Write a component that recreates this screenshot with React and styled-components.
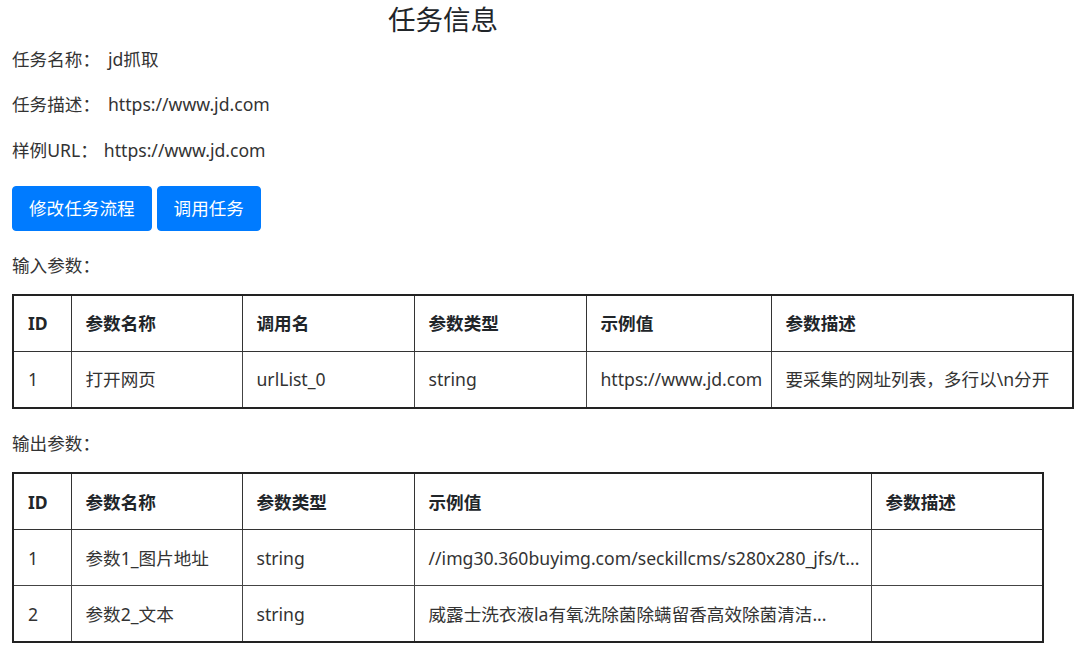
import React from 'react';
import styled, { createGlobalStyle } from 'styled-components';

const GlobalStyle = createGlobalStyle`
  html, body {
    margin: 0;
    padding: 0;
    background: #fff;
  }
  body {
    font-family: "Segoe UI", "Noto Sans", "Noto Sans CJK SC", sans-serif;
    font-size: 17.6px;
    line-height: 1.5;
    color: #333;
  }
`;

const Page = styled.div`
  padding: 0 8px 0 12px;
  width: 1080px;
  box-sizing: border-box;
`;

const Title = styled.h2`
  width: 862px;
  margin: 0;
  padding-top: 3px;
  text-align: center;
  font-size: 27.5px;
  font-weight: 400;
  line-height: 34px;
  color: #212529;
`;

const InfoList = styled.div`
  display: flex;
  flex-direction: column;
  gap: 19px;
  margin-top: 9px;
`;

const InfoRow = styled.div`
  display: flex;
  gap: ${p => p.$gap || 8}px;
  line-height: 26.4px;
`;

const Toolbar = styled.div`
  display: flex;
  gap: 5px;
  margin-top: 23px;
`;

const Button = styled.button`
  font-family: inherit;
  font-size: 17.6px;
  line-height: 26.4px;
  color: #fff;
  background: #007bff;
  border: 1px solid #007bff;
  border-radius: 4px;
  padding: 8px 16px;
  cursor: pointer;
`;

const SectionLabel = styled.div`
  line-height: 26.4px;
  margin-top: ${p => p.$top}px;
  margin-bottom: 16px;
`;

const Table = styled.table`
  border-collapse: collapse;
  table-layout: fixed;
  width: ${p => p.$width}px;
  border: 2px solid #222;
`;

const Col = styled.col`
  width: ${p => p.$w}px;
`;

const Th = styled.th`
  height: 55px;
  padding: 0 14px;
  text-align: left;
  font-weight: 700;
  color: #212529;
  border: 1px solid #333;
  vertical-align: middle;
`;

const Td = styled.td`
  height: 55px;
  padding: 0 12px 0 14px;
  color: #333;
  border: 1px solid #444;
  vertical-align: middle;
  white-space: nowrap;
  overflow: hidden;
`;

const inputCols = [58, 171, 172, 172, 185, 302];
const inputHead = ['ID', '参数名称', '调用名', '参数类型', '示例值', '参数描述'];
const inputRows = [
  ['1', '打开网页', 'urlList_0', 'string', 'https://www.jd.com', '要采集的网址列表，多行以\\n分开'],
];

const outputCols = [58, 171, 172, 457, 172];
const outputHead = ['ID', '参数名称', '参数类型', '示例值', '参数描述'];
const outputRows = [
  ['1', '参数1_图片地址', 'string', '//img30.360buyimg.com/seckillcms/s280x280_jfs/t...', ''],
  ['2', '参数2_文本', 'string', '威露士洗衣液la有氧洗除菌除螨留香高效除菌清洁...', ''],
];

const ParamTable = ({ cols, head, rows }) => (
  <Table $width={cols.reduce((a, b) => a + b, 0)}>
    <colgroup>
      {cols.map((w, i) => <Col key={i} $w={w} />)}
    </colgroup>
    <thead>
      <tr>
        {head.map(h => <Th key={h}>{h}</Th>)}
      </tr>
    </thead>
    <tbody>
      {rows.map(r => (
        <tr key={r[0]}>
          {r.map((c, i) => <Td key={i}>{c}</Td>)}
        </tr>
      ))}
    </tbody>
  </Table>
);

const App = () => {
  return (
    <Page>
      <GlobalStyle />
      <Title>任务信息</Title>
      <InfoList>
        <InfoRow><span>任务名称：</span><span>jd抓取</span></InfoRow>
        <InfoRow><span>任务描述：</span><span>https://www.jd.com</span></InfoRow>
        <InfoRow $gap={6}><span>样例URL：</span><span>https://www.jd.com</span></InfoRow>
      </InfoList>
      <Toolbar>
        <Button>修改任务流程</Button>
        <Button>调用任务</Button>
      </Toolbar>
      <SectionLabel $top={21}>输入参数：</SectionLabel>
      <ParamTable cols={inputCols} head={inputHead} rows={inputRows} />
      <SectionLabel $top={21}>输出参数：</SectionLabel>
      <ParamTable cols={outputCols} head={outputHead} rows={outputRows} />
    </Page>
  );
};

export default App;
